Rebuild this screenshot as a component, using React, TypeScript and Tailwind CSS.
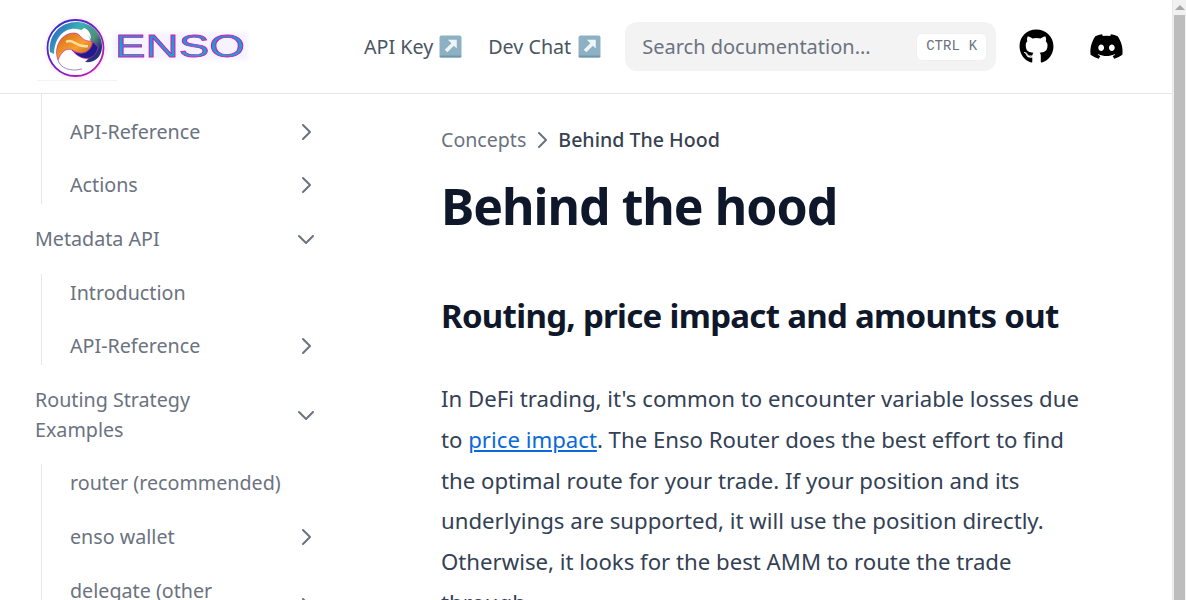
import React from "react";
import { FaGithub, FaDiscord } from "react-icons/fa";

function Arrow() {
  return (
    <svg width="23" height="23" viewBox="0 0 22 22" className="shrink-0">
      <rect x="0.5" y="0.5" width="21" height="21" rx="2" fill="#8db0c2" />
      <rect x="0.5" y="19.5" width="21" height="2" rx="1" fill="#6f97ab" />
      <path d="M8.5 4.5H17V13L14.2 10.2L8 16.5L5.5 14L11.8 7.8Z" fill="#eef5f8" />
    </svg>
  );
}

function Logo() {
  return (
    <svg width="215" height="84" viewBox="35 5 215 84" className="shrink-0">
      <defs>
        <linearGradient id="ring" x1="0" y1="0" x2="1" y2="1">
          <stop offset="0" stopColor="#1a30d8" />
          <stop offset="0.5" stopColor="#7a1cc8" />
          <stop offset="1" stopColor="#d820b0" />
        </linearGradient>
        <linearGradient id="band" x1="0" y1="0" x2="1" y2="0.6">
          <stop offset="0" stopColor="#2848c8" />
          <stop offset="0.45" stopColor="#38b0b8" />
          <stop offset="0.8" stopColor="#4f8f78" />
          <stop offset="1" stopColor="#24307a" />
        </linearGradient>
        <linearGradient id="fire" x1="0" y1="0" x2="1" y2="1">
          <stop offset="0" stopColor="#d06414" />
          <stop offset="0.55" stopColor="#f8a030" />
          <stop offset="1" stopColor="#a85020" />
        </linearGradient>
        <linearGradient id="word" x1="0" y1="0" x2="0" y2="1">
          <stop offset="0" stopColor="#1f8ee0" />
          <stop offset="1" stopColor="#18a8d8" />
        </linearGradient>
        <filter id="soft" x="-10%" y="-10%" width="120%" height="120%">
          <feGaussianBlur stdDeviation="0.45" />
        </filter>
        <filter id="halo" x="-20%" y="-20%" width="140%" height="140%">
          <feGaussianBlur stdDeviation="2" />
        </filter>
      </defs>
      <circle cx="75.5" cy="48" r="30" fill="#fbe6f4" filter="url(#halo)" />
      <circle cx="75.5" cy="48" r="28" fill="#ffffff" />
      <rect x="113" y="32" width="135" height="28" fill="#f6f3ff" filter="url(#halo)" />
      <rect x="37" y="80" width="80" height="1" fill="#fbeefa" />
      <g filter="url(#soft)">
        <circle cx="75.5" cy="48" r="28" fill="none" stroke="url(#ring)" strokeWidth="1.8" />
        <path d="M50 52C48 32 64 21 78 22C93 23 103 35 102 48C101 58 94 63 85 62C93 56 95 41 85 32C72 24 55 31 54 54Z" fill="url(#band)" />
        <path d="M84 28C89 30 91 34 91 39C88 35 85 33 80 31Z" fill="#ffffff" />
        <path d="M58 60C53 46 62 33 74 33C82 33 80 42 92 41C93 53 82 56 74 51C68 47 62 50 58 60Z" fill="url(#fire)" stroke="#c020a0" strokeWidth="0.6" />
        <path d="M66 42C74 38 76 48 88 46" fill="none" stroke="#ffe0a0" strokeWidth="2.4" />
        <path d="M72 50C80 56 90 54 93 42L98 47C96 60 82 63 72 50Z" fill="#1c1c8c" stroke="#d020a8" strokeWidth="0.7" />
        <path d="M58 60C60 68 70 72 82 69" fill="none" stroke="#9a7ab0" strokeWidth="0.9" />
        <text
          x="115"
          y="57"
          textLength="130"
          lengthAdjust="spacingAndGlyphs"
          fontFamily="Liberation Sans, sans-serif"
          fontSize="32"
          fill="url(#word)"
          stroke="#d01ea8"
          strokeWidth="0.8"
        >
          ENSO
        </text>
      </g>
    </svg>
  );
}

function Chevron({ down = false }: { down?: boolean }) {
  return (
    <svg
      width="24"
      height="24"
      viewBox="0 0 24 24"
      fill="none"
      stroke="#6b7280"
      strokeWidth="2"
      strokeLinecap="round"
      strokeLinejoin="round"
      className={down ? "shrink-0 rotate-90" : "shrink-0"}
    >
      <path d="M9 5l7 7-7 7" />
    </svg>
  );
}

function Row({ label, open, arrow, inner }: { label: React.ReactNode; open?: boolean; arrow?: boolean; inner?: boolean }) {
  return (
    <div className={`flex items-center justify-between py-1 text-[19.7px] leading-[30px] text-[#6b7280] ${inner ? "pl-[28px]" : "pl-[35px]"}`}>
      <span className="w-[215px]">{label}</span>
      {(arrow || open) && <Chevron down={open} />}
    </div>
  );
}

function Group({ children, first }: { children: React.ReactNode; first?: boolean }) {
  return (
    <div className={`ml-[41px] flex flex-col gap-[15.6px] border-l border-[#e5e7eb] ${first ? "pt-[18.9px]" : ""}`}>
      {children}
    </div>
  );
}

export default function App() {
  return (
    <div className="flex h-[600px] overflow-hidden bg-white" style={{ fontFamily: '"Noto Sans", sans-serif' }}>
      <div className="flex w-[1172px] flex-col">
        <header className="flex h-[94px] shrink-0 items-center border-b border-[#e5e7eb] pl-[35px]">
          <Logo />
          <nav className="ml-[114px] flex items-center gap-[26px] text-[19.7px] text-[#4b5563]">
            <span className="flex items-center gap-[6px]">API Key <Arrow /></span>
            <span className="flex items-center gap-[7px]">Dev Chat <Arrow /></span>
          </nav>
          <div className="ml-[24px] flex h-[49px] w-[371px] items-center justify-between rounded-xl bg-[#f3f3f3] pl-[17px] pr-[9px] text-[20px] text-[#6b7280]">
            <span>Search documentation…</span>
            <kbd className="flex h-[28px] w-[71px] items-center justify-center gap-[9px] rounded-md border border-[#f0f0f0] bg-white text-[14px] text-[#6b7280]" style={{ fontFamily: '"Liberation Mono", monospace' }}>
              <span>CTRL</span><span>K</span>
            </kbd>
          </div>
          <FaGithub className="ml-[23px] text-[35px] text-black" />
          <FaDiscord className="ml-[35px] text-[35px] text-black" />
        </header>
        <div className="flex min-h-0 flex-1">
          <aside className="flex w-[340px] shrink-0 flex-col gap-[15.6px] pr-[22px]">
            <Group first>
              <Row inner arrow label="API-Reference" />
              <Row inner arrow label="Actions" />
            </Group>
            <Row open label="Metadata API" />
            <Group>
              <Row inner label="Introduction" />
              <Row inner arrow label="API-Reference" />
            </Group>
            <Row open label="Routing Strategy Examples" />
            <Group>
              <Row inner label="router (recommended)" />
              <Row inner arrow label="enso wallet" />
              <Row inner arrow label="delegate (other consumers)" />
            </Group>
          </aside>
          <main className="min-w-0 flex-1 pl-[101px] pr-[77px] pt-[31px]">
            <div className="flex items-center text-[19.6px] leading-[30px] text-[#6b7280]">
              <span>Concepts</span>
              <span className="mx-[4px]"><Chevron /></span>
              <span className="font-medium text-[#374151]">Behind The Hood</span>
            </div>
            <h1 className="mt-[19px] text-[50px] font-bold leading-[64px] tracking-[-1px] text-[#0f172a]">Behind the hood</h1>
            <h2 className="mt-[56px] text-[33px] font-bold leading-[44px] tracking-[-0.7px] text-[#0f172a]">Routing, price impact and amounts out</h2>
            <p className="mt-[41px] text-[22.2px] leading-[40.8px] text-[#334155]">
              In DeFi trading, it's common to encounter variable losses due to <span className="text-[#0969da] underline">price impact</span>. The Enso Router does the best effort to find the optimal route for your trade. If your position and its underlyings are supported, it will use the position directly. Otherwise, it looks for the best AMM to route the trade through.
            </p>
          </main>
        </div>
      </div>
      <div className="flex w-[14px] flex-col items-center border-l border-[#e8e8e8] bg-[#f1f1f1]">
        <div className="mt-[5px] h-0 w-0 border-x-[5px] border-b-[5px] border-x-transparent border-b-[#a8a8a8]" />
        <div className="mt-[5px] w-[11px] flex-1 bg-[#bdbdbd]" />
      </div>
    </div>
  );
}
